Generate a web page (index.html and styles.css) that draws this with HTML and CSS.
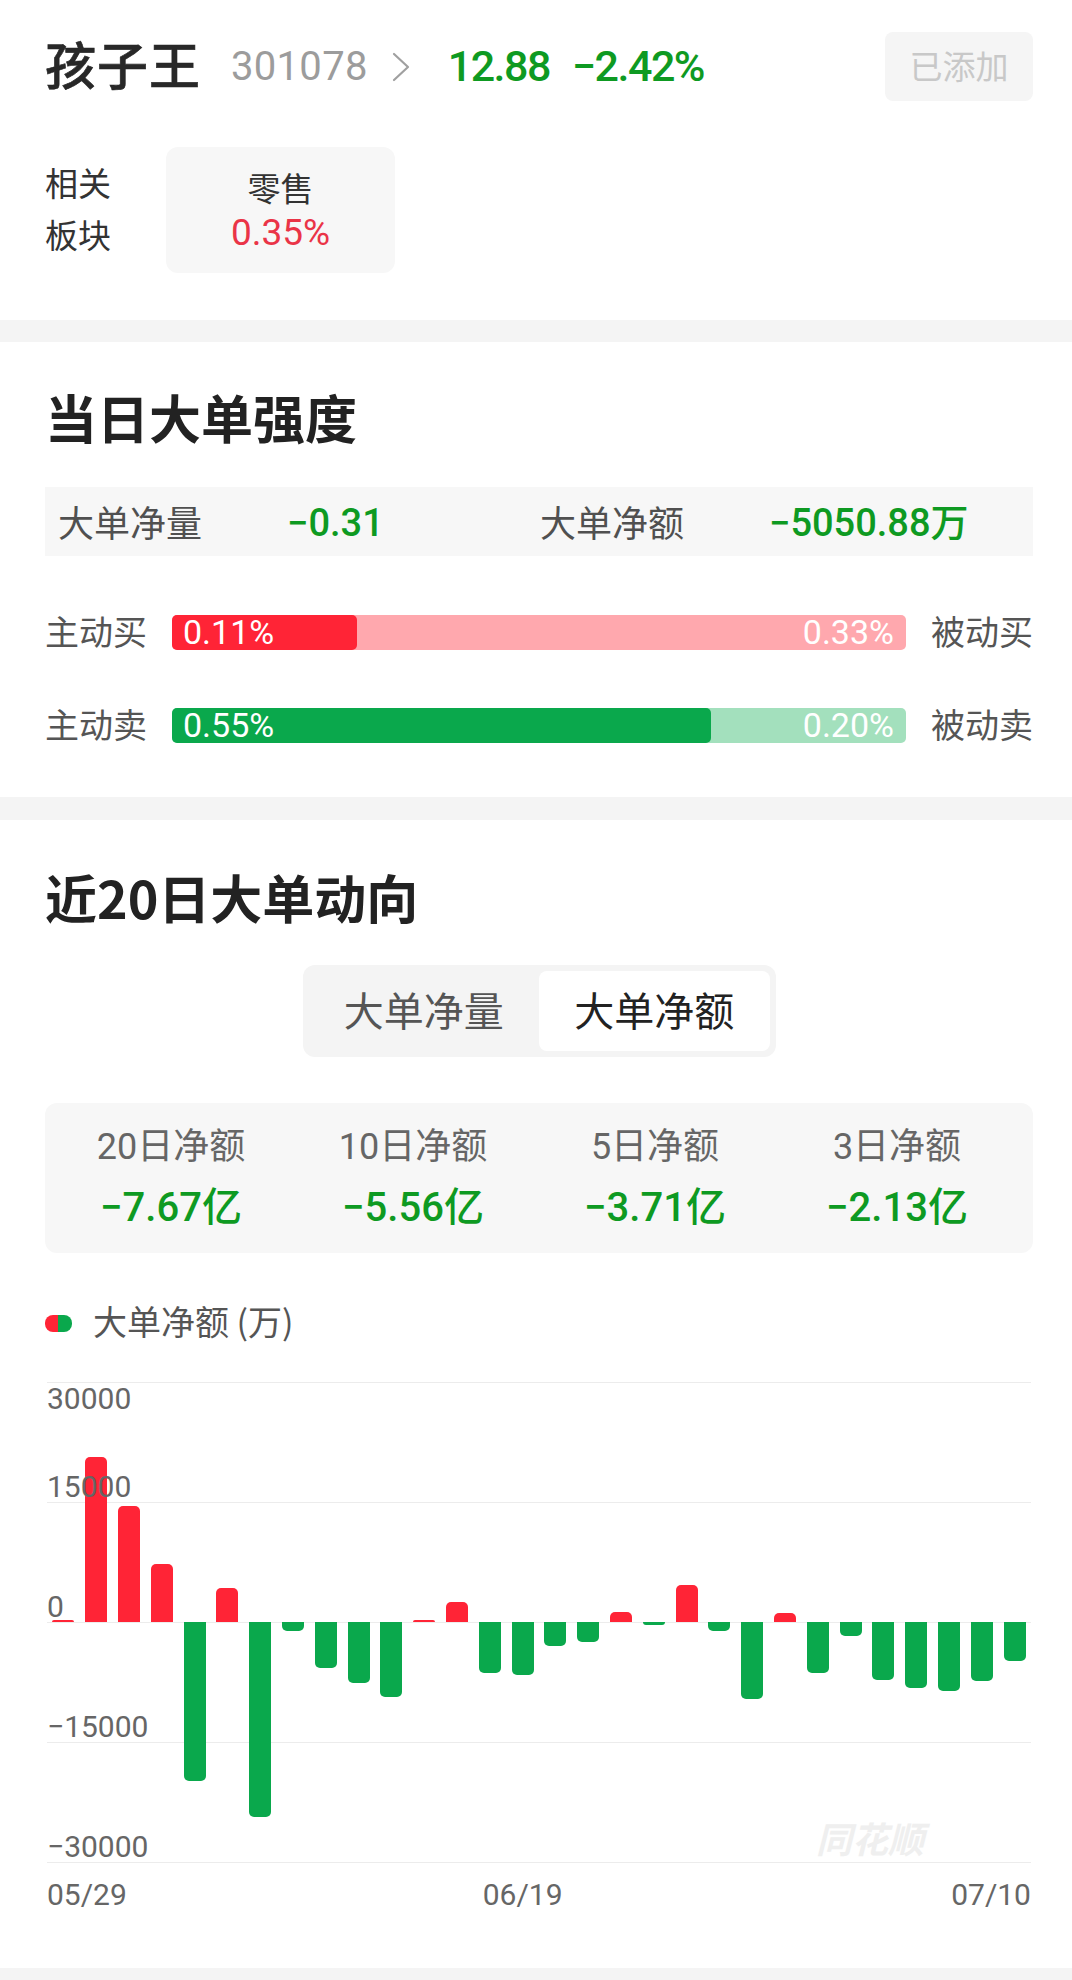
FILE: index.html
```html
<!DOCTYPE html>
<html lang="zh-CN">
<head>
<meta charset="utf-8">
<title>孩子王 大单</title>
<link rel="stylesheet" href="styles.css">
</head>
<body>
<div class="page">
  <section class="card head">
    <div class="stock-row">
      <span class="stock-name">孩子王</span>
      <span class="stock-code">301078</span>
      <svg class="chev" viewBox="0 0 20 30" width="20" height="30"><path d="M3 2 L17 15 L3 28" fill="none" stroke="#a0a0a0" stroke-width="2.2" stroke-linecap="round" stroke-linejoin="round"/></svg>
      <span class="price">12.88</span>
      <span class="chg">−2.42%</span>
      <div class="added">已添加</div>
    </div>
    <div class="sector-row">
      <div class="sector-label">相关<br>板块</div>
      <div class="sector-card">
        <div class="sector-name">零售</div>
        <div class="sector-pct">0.35%</div>
      </div>
    </div>
  </section>

  <section class="card strength">
    <h2 class="sec-title">当日大单强度</h2>
    <div class="net-box">
      <span class="net-label">大单净量</span>
      <span class="net-val">−0.31</span>
      <span class="net-label">大单净额</span>
      <span class="net-val">−5050.88万</span>
    </div>
    <div class="flow-row">
      <span class="flow-label">主动买</span>
      <div class="track buy">
        <div class="fill" style="width:25.2%"><span>0.11%</span></div>
        <span class="rest">0.33%</span>
      </div>
      <span class="flow-label right">被动买</span>
    </div>
    <div class="flow-row sell-row">
      <span class="flow-label">主动卖</span>
      <div class="track sell">
        <div class="fill" style="width:73.4%"><span>0.55%</span></div>
        <span class="rest">0.20%</span>
      </div>
      <span class="flow-label right">被动卖</span>
    </div>
  </section>

  <section class="card trend">
    <h2 class="sec-title t2">近20日大单动向</h2>
    <div class="seg-wrap">
      <div class="seg">
        <span class="seg-item">大单净量</span>
        <span class="seg-item active">大单净额</span>
      </div>
    </div>
    <div class="stats">
      <div class="stat"><div class="stat-label">20日净额</div><div class="stat-val">−7.67亿</div></div>
      <div class="stat"><div class="stat-label">10日净额</div><div class="stat-val">−5.56亿</div></div>
      <div class="stat"><div class="stat-label">5日净额</div><div class="stat-val">−3.71亿</div></div>
      <div class="stat"><div class="stat-label">3日净额</div><div class="stat-val">−2.13亿</div></div>
    </div>
    <div class="legend"><i class="legend-dot"></i><span>大单净额 (万)</span></div>
    <div class="plot">
      <div class="bars">
        <div class="slot"><div class="up"><i class="bar pos" style="height:2px"></i></div><div class="down"></div></div>
        <div class="slot"><div class="up"><i class="bar pos" style="height:165px"></i></div><div class="down"></div></div>
        <div class="slot"><div class="up"><i class="bar pos" style="height:116px"></i></div><div class="down"></div></div>
        <div class="slot"><div class="up"><i class="bar pos" style="height:58px"></i></div><div class="down"></div></div>
        <div class="slot"><div class="up"></div><div class="down"><i class="bar neg" style="height:159px"></i></div></div>
        <div class="slot"><div class="up"><i class="bar pos" style="height:34px"></i></div><div class="down"></div></div>
        <div class="slot"><div class="up"></div><div class="down"><i class="bar neg" style="height:195px"></i></div></div>
        <div class="slot"><div class="up"></div><div class="down"><i class="bar neg" style="height:9px"></i></div></div>
        <div class="slot"><div class="up"></div><div class="down"><i class="bar neg" style="height:46px"></i></div></div>
        <div class="slot"><div class="up"></div><div class="down"><i class="bar neg" style="height:61px"></i></div></div>
        <div class="slot"><div class="up"></div><div class="down"><i class="bar neg" style="height:75px"></i></div></div>
        <div class="slot"><div class="up"><i class="bar pos" style="height:2px"></i></div><div class="down"></div></div>
        <div class="slot"><div class="up"><i class="bar pos" style="height:20px"></i></div><div class="down"></div></div>
        <div class="slot"><div class="up"></div><div class="down"><i class="bar neg" style="height:51px"></i></div></div>
        <div class="slot"><div class="up"></div><div class="down"><i class="bar neg" style="height:53px"></i></div></div>
        <div class="slot"><div class="up"></div><div class="down"><i class="bar neg" style="height:24px"></i></div></div>
        <div class="slot"><div class="up"></div><div class="down"><i class="bar neg" style="height:20px"></i></div></div>
        <div class="slot"><div class="up"><i class="bar pos" style="height:10px"></i></div><div class="down"></div></div>
        <div class="slot"><div class="up"></div><div class="down"><i class="bar neg" style="height:3px"></i></div></div>
        <div class="slot"><div class="up"><i class="bar pos" style="height:37px"></i></div><div class="down"></div></div>
        <div class="slot"><div class="up"></div><div class="down"><i class="bar neg" style="height:9px"></i></div></div>
        <div class="slot"><div class="up"></div><div class="down"><i class="bar neg" style="height:77px"></i></div></div>
        <div class="slot"><div class="up"><i class="bar pos" style="height:9px"></i></div><div class="down"></div></div>
        <div class="slot"><div class="up"></div><div class="down"><i class="bar neg" style="height:51px"></i></div></div>
        <div class="slot"><div class="up"></div><div class="down"><i class="bar neg" style="height:14px"></i></div></div>
        <div class="slot"><div class="up"></div><div class="down"><i class="bar neg" style="height:58px"></i></div></div>
        <div class="slot"><div class="up"></div><div class="down"><i class="bar neg" style="height:66px"></i></div></div>
        <div class="slot"><div class="up"></div><div class="down"><i class="bar neg" style="height:69px"></i></div></div>
        <div class="slot"><div class="up"></div><div class="down"><i class="bar neg" style="height:59px"></i></div></div>
        <div class="slot"><div class="up"></div><div class="down"><i class="bar neg" style="height:39px"></i></div></div>
      </div>
      <div class="ylabels">
        <div class="ycell first"><span>30000</span><span>15000</span></div>
        <div class="ycell"><span>0</span></div>
        <div class="ycell"><span>−15000</span></div>
        <div class="ycell last"><span>−30000</span><span class="wm">同花顺</span></div>
      </div>
    </div>
    <div class="dates">
      <span class="d-start">05/29</span>
      <span class="d-mid">06/19</span>
      <span class="d-end">07/10</span>
    </div>
  </section>
</div>
</body>
</html>
```
FILE: styles.css
```css
* { box-sizing: border-box; margin: 0; padding: 0; }

body {
  width: 1072px;
  min-height: 1980px;
  background: #f4f4f4;
  font-family: Roboto, "Noto Sans CJK SC", sans-serif;
  color: #222;
}

.page { display: flex; flex-direction: column; }

.card {
  background: #fff;
  padding-left: 45px;
  padding-right: 39px;
}

/* ---------- header ---------- */
.head { padding-top: 32px; padding-bottom: 47px; margin-bottom: 22px; }

.stock-row { display: flex; align-items: center; height: 69px; }

.stock-name {
  font-family: "Noto Sans CJK SC", sans-serif;
  font-size: 51px;
  font-weight: 500;
  line-height: 69px;
  letter-spacing: 1px;
  color: #282828;
  padding-bottom: 6px;
  -webkit-text-stroke: 0.6px #282828;
}

.stock-code {
  margin-left: 30px;
  font-size: 40px;
  line-height: 69px;
  letter-spacing: 0.3px;
  color: #9c9c9c;
}

.chev { margin-left: 23px; display: block; }

.price, .chg {
  font-size: 43px;
  font-weight: 500;
  line-height: 69px;
  letter-spacing: -1.5px;
  color: #0e9a22;
}
.price { margin-left: 37px; }
.chg { margin-left: 22px; }

.added {
  margin-left: auto;
  width: 148px;
  height: 69px;
  border-radius: 8px;
  background: #f5f5f5;
  color: #c8c8c8;
  font-family: "Noto Sans CJK SC", sans-serif;
  font-size: 33px;
  line-height: 66px;
  text-align: center;
}

.sector-row { display: flex; align-items: center; margin-top: 46px; }

.sector-label {
  font-family: "Noto Sans CJK SC", sans-serif;
  font-size: 33px;
  line-height: 52px;
  color: #333;
  width: 121px;
  padding-bottom: 4px;
}

.sector-card {
  width: 229px;
  height: 126px;
  padding: 17px 0;
  border-radius: 12px;
  background: #f7f7f7;
  text-align: center;
}
.sector-name {
  font-family: "Noto Sans CJK SC", sans-serif;
  font-size: 33px;
  line-height: 46px;
  color: #333;
}
.sector-pct {
  font-size: 37px;
  line-height: 46px;
  color: #ea3447;
}

/* ---------- section titles ---------- */
.sec-title {
  font-family: "Noto Sans CJK SC", sans-serif;
  font-size: 52px;
  font-weight: 700;
  line-height: 60px;
  color: #222;
}

/* ---------- strength ---------- */
.strength { padding-top: 45px; padding-bottom: 56px; margin-bottom: 23px; }

.net-box {
  margin-top: 40px;
  height: 69px;
  background: #f7f7f7;
  display: grid;
  grid-template-columns: 229px 253px 229px auto;
  align-items: center;
  padding-left: 13px;
}
.net-label {
  font-family: "Noto Sans CJK SC", sans-serif;
  font-size: 36px;
  line-height: 69px;
  color: #505050;
  padding-bottom: 4px;
}
.net-val {
  font-size: 38px;
  font-weight: 500;
  line-height: 69px;
  color: #0e9a22;
}

.flow-row {
  display: grid;
  grid-template-columns: 127px 1fr 127px;
  align-items: center;
  height: 35px;
  margin-top: 57px;
}
.sell-row { margin-top: 58px; }

.flow-label {
  font-family: "Noto Sans CJK SC", sans-serif;
  font-size: 34px;
  line-height: 35px;
  color: #555;
  padding-bottom: 4px;
}
.flow-label.right { text-align: right; }

.track {
  display: flex;
  align-items: center;
  height: 35px;
  border-radius: 5px;
  color: #fff;
  font-size: 34px;
  line-height: 35px;
}
.track .fill { height: 35px; border-radius: 5px; padding-left: 11px; }
.track .rest { flex: 1; text-align: right; padding-right: 12px; }
.buy { background: #ffa8ae; }
.buy .fill { background: #ff2436; }
.sell { background: #a3e0bd; }
.sell .fill { background: #0aa84c; }

/* ---------- trend ---------- */
.trend { padding-top: 47px; padding-bottom: 53px; }

.seg-wrap { display: flex; justify-content: center; margin-top: 38px; }
.seg {
  display: flex;
  padding: 6px;
  border-radius: 12px;
  background: #f4f4f4;
}
.seg-item {
  width: 230.5px;
  height: 80px;
  border-radius: 8px;
  text-align: center;
  font-family: "Noto Sans CJK SC", sans-serif;
  font-size: 40px;
  line-height: 76px;
  color: #555;
}
.seg-item.active { background: #fff; color: #222; }

.stats {
  margin-top: 46px;
  height: 150px;
  border-radius: 12px;
  background: #f7f7f7;
  display: grid;
  grid-template-columns: repeat(4, 1fr);
  padding: 20px 15px 20px 5px;
  text-align: center;
}
.stat-label {
  font-size: 36px;
  line-height: 48px;
  color: #666;
}
.stat-val {
  margin-top: 12px;
  font-size: 40px;
  font-weight: 500;
  line-height: 50px;
  color: #0e9a22;
}

.legend {
  display: flex;
  align-items: center;
  margin-top: 47px;
  height: 46px;
  font-family: "Noto Sans CJK SC", sans-serif;
  font-size: 34px;
  line-height: 46px;
  color: #555;
}
.legend-dot {
  width: 27px;
  height: 17px;
  border-radius: 8px;
  background: linear-gradient(to right, #ff2436 50%, #0aa84c 50%);
  margin-right: 21px;
}
.legend span { padding-bottom: 4px; }

.plot {
  margin: 36px 2px 0 2px;
  height: 481px;
  display: grid;
  background: repeating-linear-gradient(to bottom, #ececec 0, #ececec 1px, transparent 1px, transparent 120px);
}

.bars { grid-area: 1 / 1; display: flex; }
.slot { flex: 1; display: flex; flex-direction: column; align-items: center; }
.up { height: 240px; display: flex; align-items: flex-end; }
.down { height: 241px; display: flex; align-items: flex-start; }
.bar { display: block; width: 22px; }
.pos { background: #ff2436; border-radius: 5px 5px 0 0; }
.neg { background: #0aa84c; border-radius: 0 0 5px 5px; }

.ylabels {
  grid-area: 1 / 1;
  display: grid;
  grid-template-rows: repeat(4, 120px);
  font-size: 30px;
  line-height: 30px;
  color: #666;
}
.ycell { display: flex; flex-direction: column; justify-content: flex-end; align-items: flex-start; }
.ycell.first { justify-content: space-between; padding-top: 2px; }
.ycell.last { flex-direction: row; justify-content: space-between; align-items: flex-end; }

.wm {
  font-family: "Noto Sans CJK SC", sans-serif;
  font-size: 36px;
  font-weight: 700;
  font-style: italic;
  line-height: 40px;
  color: #efefef;
  margin-right: 107px;
  margin-bottom: 5px;
}

.dates {
  margin: 12px 2px 0 2px;
  display: grid;
  grid-template-columns: repeat(30, 1fr);
  font-size: 30px;
  line-height: 40px;
  color: #666;
}
.d-start { grid-column: 1 / span 5; justify-self: start; }
.d-mid { grid-column: 14 / span 3; justify-self: center; white-space: nowrap; }
.d-end { grid-column: 26 / span 5; justify-self: end; }
```
